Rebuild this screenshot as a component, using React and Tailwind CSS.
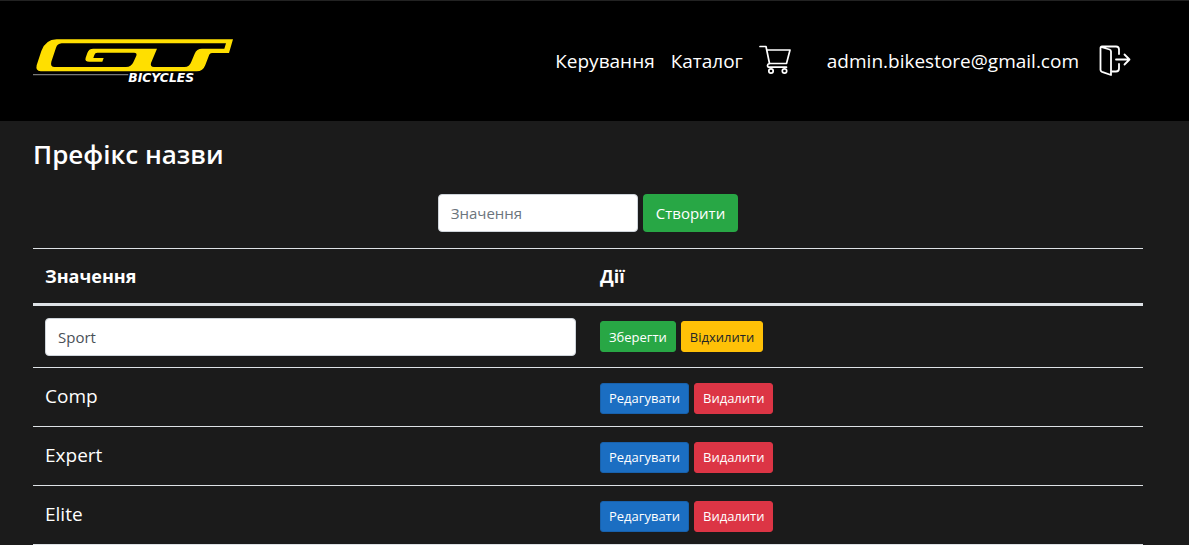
import React from "react";

const rows = ["Comp", "Expert", "Elite"];

const small = "h-[31px] rounded-[3px] border px-2 text-[13px] leading-5";

function Logo() {
  return (
    <svg viewBox="39 39 600 150" className="h-[50px] w-[200px] overflow-visible" role="img" aria-label="GT Bicycles">
      <path
        fillRule="evenodd"
        fill="#ffdf00"
        d="M110 43H639L627 84H576Q569 84 566 94L556 120Q549 139 530 139H62Q46 138 50 121L64 78Q76 44 110 43ZM125 55Q112 56 108 68L94 110Q90 126 104 126H318Q334 126 340 112L349 92Q352 83 342 83H232Q225 83 223 90L220 99H251L247 110H208Q193 110 197 98L202 84Q206 71 220 71H411L393 114Q390 126 402 126H494Q508 126 514 110L524 86Q530 71 546 71H613L618 55Z"
      />
      <path d="M39 149H325" stroke="#777" strokeWidth="4" />
      <text x="325" y="171" fill="#fff" fontSize="37" fontWeight="700" fontStyle="italic" fontFamily="DejaVu Sans, sans-serif">
        BICYCLES
      </text>
    </svg>
  );
}

function CartIcon() {
  return (
    <svg viewBox="0 0 32 32" className="size-8" fill="none" stroke="#fff" strokeWidth="1.7" strokeLinecap="round" strokeLinejoin="round">
      <path d="M1 1.5H7L10.5 18.5H27.5L31 5H8" />
      <path d="M10.5 18.5Q8.500 19 8.500 20.500Q8.500 22.200 10.500 22.200H27.500" />
      <circle cx="12" cy="26" r="2.200" />
      <circle cx="25.500" cy="26" r="2.200" />
    </svg>
  );
}

function ExitIcon() {
  return (
    <svg viewBox="0 0 32 32" className="block size-8" fill="none" stroke="#fff" strokeWidth="1.8" strokeLinecap="round" strokeLinejoin="round">
      <path d="M2 2L10.500 4.500Q12 5 12 6.500V30L3 26.800Q1.500 26.200 1.500 25V3Q1.500 1.500 3 1.500H17Q20 1.500 20 4.500V9" />
      <path d="M20 19V23.500Q20 26.500 17 26.500H13M17 14.500H30.500M25.500 9.500L30.500 14.500L25.500 19.500" />
    </svg>
  );
}

export default function App() {
  return (
    <div className="min-h-screen bg-[#1b1b1b] font-['Open_Sans','Noto_Sans',sans-serif] text-white">
      <header className="flex h-[121px] items-center justify-between border-t border-[#222] bg-black pr-[58px] pl-[33px]">
        <a href="#" className="pt-1">
          <Logo />
        </a>
        <nav className="flex items-center text-[19px]">
          <a href="#" className="mr-4">Керування</a>
          <a href="#" className="mr-4">Каталог</a>
          <a href="#" aria-label="Кошик" className="mr-9"><CartIcon /></a>
          <a href="#" className="mr-5">admin.bikestore@gmail.com</a>
          <button type="button" aria-label="Вийти"><ExitIcon /></button>
        </nav>
      </header>
      <main className="pr-[46px] pl-[33px]">
        <h1 className="pt-[15px] text-[26px] leading-9 font-semibold">Префікс назви</h1>
        <form className="mt-[22px] mb-4 flex justify-center gap-[5px]">
          <input
            aria-label="Значення"
            placeholder="Значення"
            className="h-[38px] w-[200px] rounded border border-[#ced4da] bg-white px-3 text-[15px] text-[#495057] placeholder:text-[#6c757d]"
          />
          <button type="button" className="h-[38px] rounded bg-[#28a745] px-[13px] text-[15px]">Створити</button>
        </form>
        <table className="w-full table-fixed border-b border-[#dee2e6] text-left text-[19px]">
          <thead>
            <tr className="h-14 border-t border-b-3 border-[#dee2e6] text-lg">
              <th className="px-3 font-bold">Значення</th>
              <th className="px-3 font-bold">Дії</th>
            </tr>
          </thead>
          <tbody>
            <tr className="h-[63px]">
              <td className="px-3">
                <input
                  aria-label="Значення префікса"
                  defaultValue="Sport"
                  className="block h-[38px] w-full rounded border border-[#ced4da] bg-white px-3 text-[15px] text-[#495057]"
                />
              </td>
              <td className="px-3">
                <div className="flex gap-[5px]">
                  <button type="button" className={small + " border-[#28a745] bg-[#28a745]"}>Зберегти</button>
                  <button type="button" className={small + " border-[#ffc107] bg-[#ffc107] text-[#212529]"}>Відхилити</button>
                </div>
              </td>
            </tr>
            {rows.map((name) => (
              <tr key={name} className="h-[59px] border-t border-[#dee2e6]">
                <td className="px-3 pb-0.5">{name}</td>
                <td className="px-3 pt-0.5">
                  <div className="flex gap-[5px]">
                    <button type="button" className={small + " border-[#1861ac] bg-[#1b6ec2]"}>Редагувати</button>
                    <button type="button" className={small + " border-[#dc3545] bg-[#dc3545]"}>Видалити</button>
                  </div>
                </td>
              </tr>
            ))}
          </tbody>
        </table>
      </main>
    </div>
  );
}
